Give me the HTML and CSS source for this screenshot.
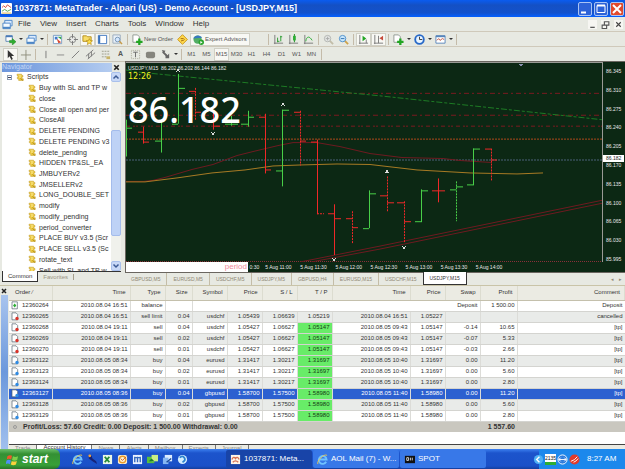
FILE: index.html
```html
<!DOCTYPE html>
<html lang="en">
<head>
<meta charset="utf-8">
<title>1037871: MetaTrader - Alpari (US)</title>
<link rel="stylesheet" href="styles.css">
</head>
<body>
<svg class="defs" aria-hidden="true">
  <symbol id="plus-doc" viewBox="0 0 12 12"><path d="M1 2h7v6H1z" fill="#fff" stroke="#5b86b5"/><path d="M1 2.500h7" stroke="#4a7ab8" stroke-width="2"/><path d="M5 7h3V5l4 3.500-4 3.500V9.500H5z" fill="#2fae2f" stroke="#158015" stroke-width=".5"/></symbol>
  <symbol id="windows" viewBox="0 0 12 12"><path d="M3 1.500h8v6H3z" fill="#dcecff" stroke="#4d86c6"/><path d="M1 4.500h8v6H1z" fill="#f4faff" stroke="#4d86c6"/><path d="M1 9.500h8" stroke="#4d86c6" stroke-width="2"/></symbol>
  <symbol id="watch" viewBox="0 0 12 12"><path d="M1.500 1.500h9v9h-9z" fill="#fff" stroke="#7a9cc4"/><path d="M3 3h3v3H3z" fill="#3b7ad0"/><path d="M5 5l5 4-3 1z" fill="#d8482f"/><path d="M6 3h4v3z" fill="#36a84a"/></symbol>
  <symbol id="target" viewBox="0 0 12 12"><circle cx="6" cy="6" r="3.500" fill="none" stroke="#888"/><path d="M6 0v12M0 6h12" stroke="#777"/><circle cx="6" cy="6" r="1.500" fill="#eee"/></symbol>
  <symbol id="folder-star" viewBox="0 0 12 12"><path d="M1 2h4l1 1h4v5H1z" fill="#f8dd68" stroke="#b48c1c"/><path d="M8 5l1 2.200 2.500.2-1.900 1.600.6 2.500L8 10.200 5.800 11.500l.6-2.500-1.900-1.600L7 7.200z" fill="#ffe14d" stroke="#b18612" stroke-width=".7"/></symbol>
  <symbol id="panel" viewBox="0 0 12 12"><path d="M1.500 1.500h9v9h-9z" fill="#fff" stroke="#3b73bd"/><path d="M2.500 2v8" stroke="#3b73bd" stroke-width="2"/></symbol>
  <symbol id="tester" viewBox="0 0 12 12"><path d="M1 1h8v9H1z" fill="#e8f0f8" stroke="#9ab"/><circle cx="6" cy="6" r="2.500" fill="#d5e8ff" stroke="#7393b5"/><path d="M8 8l3 3" stroke="#c89b48" stroke-width="1.500"/></symbol>
  <symbol id="add-doc" viewBox="0 0 12 12"><path d="M1 1h5l2 2v6H1z" fill="#fff" stroke="#909890"/><path d="M8 5v7M4.500 8.500h7" stroke="#22a522" stroke-width="2.500"/></symbol>
  <symbol id="diamond" viewBox="0 0 12 12"><path d="M6 .7L11.300 6 6 11.300.7 6z" fill="#ffd84a" stroke="#c99516"/><path d="M4 5h3l1 1-1 1H5v1" stroke="#a36c12" fill="none"/></symbol>
  <symbol id="expert" viewBox="0 0 12 12"><circle cx="5" cy="6" r="4.500" fill="#53ad65"/><path d="M0 5C3 0 8 1 10 4z" fill="#3979c1"/><circle cx="9" cy="9" r="3" fill="#2ba52f"/><path d="M8 7.500v3l2.500-1.500z" fill="#fff"/></symbol>
  <symbol id="bars" viewBox="0 0 12 12"><path d="M2 1v10M1 10h10" stroke="#777"/><path d="M5 4v5M8.500 2v6M5 8h2M8 3h2" stroke="#269a2b"/></symbol>
  <symbol id="candles" viewBox="0 0 12 12"><path d="M2 1v10M1 10h10" stroke="#777"/><path d="M7 0v9" stroke="#178b1d"/><path d="M5.500 2h3v5h-3z" fill="#2cad34"/></symbol>
  <symbol id="line" viewBox="0 0 12 12"><path d="M2 1v10M1 10h10" stroke="#777"/><path d="M3 8c1-6 4-6 7-1" fill="none" stroke="#2cad34"/></symbol>
  <symbol id="zoom" viewBox="0 0 12 12"><path d="M7 7l4 4" stroke="#cfa34b" stroke-width="2"/><circle cx="5" cy="5" r="3.500" fill="#c8e6fb" stroke="#4b8ecb"/><path d="M3 5h4" stroke="#2f6fae"/></symbol>
  <symbol id="zoom-off" viewBox="0 0 12 12"><path d="M7 7l4 4" stroke="#c2bda8" stroke-width="2"/><circle cx="5" cy="5" r="3.500" fill="#e4e6e4" stroke="#b1b4b0"/><path d="M3 5h4M5 3v4" stroke="#a9aba7"/></symbol>
  <symbol id="scroll" viewBox="0 0 12 12"><path d="M2 1v10M1 10h10M9 6v4" stroke="#777"/><path d="M5 2l4 3-4 3z" fill="#22a522"/></symbol>
  <symbol id="shift" viewBox="0 0 12 12"><path d="M2 1v10M1 10h10M6 2v8" stroke="#777"/><path d="M11 2L7 4.500 11 7z" fill="#c64a3a"/></symbol>
  <symbol id="clock" viewBox="0 0 12 12"><circle cx="6" cy="6" r="4.700" fill="#e8f4ff" stroke="#2869c8" stroke-width="2"/><path d="M6 3v3h3" fill="none" stroke="#333"/></symbol>
  <symbol id="template" viewBox="0 0 12 12"><path d="M1 2h10v8H1z" fill="#fff" stroke="#5885bb"/><path d="M1 2.500h10" stroke="#5885bb" stroke-width="2"/><path d="M2 7l2-2 1.500 2L8 5l2 1" fill="none" stroke="#bf4f3c"/></symbol>
  <symbol id="cursor" viewBox="0 0 12 12"><path d="M3 1v9l2-2 2 4 1.500-1L7 7.500h3z" fill="#333"/></symbol>
  <symbol id="cross" viewBox="0 0 12 12"><path d="M6.500 1v11M1 6.500h11" stroke="#8c8c7c"/></symbol>
  <symbol id="vline" viewBox="0 0 12 12"><path d="M6.500 2v8" stroke="#777"/></symbol>
  <symbol id="hline" viewBox="0 0 12 12"><path d="M2 6.500h8" stroke="#888"/></symbol>
  <symbol id="trend" viewBox="0 0 12 12"><path d="M2 10l8-8" stroke="#777"/></symbol>
  <symbol id="channel" viewBox="0 0 12 12"><path d="M1 8l8-7M3 11l8-7M4 5v5M7 3v5" stroke="#777"/></symbol>
  <symbol id="fibo" viewBox="0 0 12 12"><path d="M2 2.500h8M2 5.500h8M2 8.500h5" stroke="#9a9a88" stroke-dasharray="2 1"/><path d="M7 8h4v3H7z" fill="#c9b469"/></symbol>
  <symbol id="label" viewBox="0 0 12 12"><path d="M1.500 1.500h9v9h-9z" fill="none" stroke="#a9a998" stroke-dasharray="1 1"/><path d="M3.500 3.500h5M6 3.500V9" stroke="#666"/></symbol>
  <symbol id="shape" viewBox="0 0 12 12"><rect x="1" y="3" width="10" height="7" rx="2" fill="#85857d"/></symbol>
  <symbol id="arrows" viewBox="0 0 12 12"><path d="M2 1l4 1-2 3zM6 5l2 2 2-2v5H6z" fill="#666"/><path d="M3 3l5 5" stroke="#666" stroke-width="2"/></symbol>
  <symbol id="script" viewBox="0 0 12 12"><path d="M1.500 1h7v2h2v2H9v3h2v2.500H4V8H2V5.500h1V3H1.500z" fill="#edc93c" stroke="#c09a22" stroke-width=".7"/><path d="M4 3.500h4M4.500 5.500h3" stroke="#fff3b0"/><path d="M6.500 7.500l4 3" stroke="#9b7813"/></symbol>
  <symbol id="order-sell" viewBox="0 0 12 12"><path d="M1.500.5h6l2.500 2.500v8h-8.500z" fill="#fff" stroke="#4c5a66"/><circle cx="9" cy="9" r="2.500" fill="#d9342b"/></symbol>
  <symbol id="order-buy" viewBox="0 0 12 12"><path d="M1.500.5h6l2.500 2.500v8h-8.500z" fill="#fff" stroke="#4c5a66"/><circle cx="9" cy="9" r="2.500" fill="#2f8be4"/></symbol>
  <symbol id="order-balance" viewBox="0 0 12 12"><path d="M1.500.5h8v10.500h-8z" fill="#fff" stroke="#4c5a66"/><path d="M5.500 3L8 6 5.500 9 3 6z" fill="#2cae35"/></symbol>
  <symbol id="ie" viewBox="0 0 12 12"><path d="M10 8.500A4.300 4.300 0 1 1 10.500 6H3" fill="none" stroke="#6fc2ff" stroke-width="2"/><path d="M1 11C-1 8 8-1 11 1.500" fill="none" stroke="#f2c94a"/></symbol>
  <symbol id="up" viewBox="0 0 8 8"><path d="M1 7l3-6 3 6-3-2z" fill="#dcdcdc"/></symbol>
</svg>

<header class="titlebar">
  <svg class="app-icon" viewBox="0 0 12 12"><rect width="12" height="12" rx="1" fill="#fff"/><path d="M1 5l2-2 2 2 2-3 4 3" stroke="#d24535" fill="none"/><path d="M1 9l3-2 3 2 4-2" stroke="#55a549" fill="none"/><path d="M1 11h10" stroke="#e0b23c"/></svg>
  <h1>1037871: MetaTrader - Alpari (US) - Demo Account - [USDJPY,M15]</h1>
  <div class="win-buttons">
    <button aria-label="Minimize"><svg viewBox="0 0 12 12"><path d="M2 9.500h5" stroke="#fff" stroke-width="2"/></svg></button>
    <button aria-label="Restore"><svg viewBox="0 0 12 12"><path d="M2 2.500h8v7H2z" fill="none" stroke="#fff"/><path d="M2 2.500h8" stroke="#fff" stroke-width="2"/></svg></button>
    <button class="close" aria-label="Close"><svg viewBox="0 0 12 12"><path d="M2 2l8 8M10 2l-8 8" stroke="#fff" stroke-width="2"/></svg></button>
  </div>
</header>

<nav class="menubar">
  <svg class="menu-icon" viewBox="0 0 12 12"><use href="#windows"/></svg>
  <button>File</button><button>View</button><button>Insert</button><button>Charts</button><button>Tools</button><button>Window</button><button>Help</button>
  <div class="doc-buttons">
    <button aria-label="Minimize chart"><svg viewBox="0 0 8 8"><path d="M2 6.500h4" stroke="#444"/></svg></button>
    <button aria-label="Restore chart"><svg viewBox="0 0 8 8"><path d="M3 1.500h4v3H3zM1 4.500h4v3H1z" fill="none" stroke="#555"/></svg></button>
    <button aria-label="Close chart"><svg viewBox="0 0 8 8"><path d="M2 2l4 4M6 2L2 6" stroke="#444"/></svg></button>
  </div>
</nav>

<div class="toolbar">
  <button aria-label="New chart"><svg><use href="#plus-doc"/></svg></button><button class="drop" aria-label="New chart menu"></button>
  <button aria-label="Profiles"><svg><use href="#windows"/></svg></button><button class="drop" aria-label="Profiles menu"></button>
  <i class="sep"></i>
  <button aria-label="Market Watch"><svg><use href="#watch"/></svg></button>
  <button aria-label="Data Window"><svg><use href="#target"/></svg></button>
  <button class="on" aria-label="Navigator"><svg><use href="#folder-star"/></svg></button>
  <button class="on" aria-label="Terminal"><svg><use href="#panel"/></svg></button>
  <button aria-label="Strategy Tester"><svg><use href="#tester"/></svg></button>
  <i class="sep"></i>
  <button class="wide"><svg><use href="#add-doc"/></svg>New Order</button>
  <button aria-label="MetaEditor"><svg><use href="#diamond"/></svg></button>
  <button class="wide on"><svg><use href="#expert"/></svg>Expert Advisors</button>
  <i class="sep far"></i>
  <button aria-label="Bar chart"><svg><use href="#bars"/></svg></button>
  <button aria-label="Candlesticks"><svg><use href="#candles"/></svg></button>
  <button aria-label="Line chart"><svg><use href="#line"/></svg></button>
  <i class="sep"></i>
  <button aria-label="Zoom in"><svg><use href="#zoom-off"/></svg></button>
  <button aria-label="Zoom out"><svg><use href="#zoom"/></svg></button>
  <i class="sep"></i>
  <button class="on" aria-label="Auto scroll"><svg><use href="#scroll"/></svg></button>
  <button class="on" aria-label="Chart shift"><svg><use href="#shift"/></svg></button>
  <i class="sep"></i>
  <button aria-label="Indicators"><svg><use href="#add-doc"/></svg></button><button class="drop" aria-label="Indicators menu"></button>
  <button aria-label="Periods"><svg><use href="#clock"/></svg></button><button class="drop" aria-label="Periods menu"></button>
  <button aria-label="Templates"><svg><use href="#template"/></svg></button><button class="drop" aria-label="Templates menu"></button>
  <i class="sep"></i>
</div>

<div class="toolbar">
  <button class="on" aria-label="Cursor"><svg><use href="#cursor"/></svg></button>
  <button aria-label="Crosshair"><svg><use href="#cross"/></svg></button>
  <i class="sep"></i>
  <button aria-label="Vertical line"><svg><use href="#vline"/></svg></button>
  <button aria-label="Horizontal line"><svg><use href="#hline"/></svg></button>
  <button aria-label="Trendline"><svg><use href="#trend"/></svg></button>
  <button aria-label="Channel"><svg><use href="#channel"/></svg></button>
  <button aria-label="Fibonacci"><svg><use href="#fibo"/></svg></button>
  <button class="letter">A</button>
  <button aria-label="Text label"><svg><use href="#label"/></svg></button>
  <button aria-label="Shapes"><svg><use href="#shape"/></svg></button>
  <button aria-label="Arrows"><svg><use href="#arrows"/></svg></button><button class="drop" aria-label="Arrows menu"></button>
  <i class="sep"></i>
  <button>M1</button><button>M5</button><button class="on">M15</button><button>M30</button><button>H1</button><button>H4</button><button>D1</button><button>W1</button><button>MN</button>
  <i class="sep"></i>
</div>

<main class="workspace">
  <aside class="navigator">
    <div class="nav-head"><span>Navigator</span><button aria-label="Close navigator"><svg viewBox="0 0 8 8"><path d="M2 2l4 4M6 2L2 6" stroke="#222" stroke-width="1.500"/></svg></button></div>
    <div class="nav-body">
      <ul class="tree">
        <li class="root"><i class="box"></i><svg><use href="#script"/></svg>Scripts</li>
        <li><svg><use href="#script"/></svg>Buy with SL and TP w</li>
        <li><svg><use href="#script"/></svg>close</li>
        <li><svg><use href="#script"/></svg>Close all open and per</li>
        <li><svg><use href="#script"/></svg>CloseAll</li>
        <li><svg><use href="#script"/></svg>DELETE PENDING</li>
        <li><svg><use href="#script"/></svg>DELETE PENDING v3</li>
        <li><svg><use href="#script"/></svg>delete_pending</li>
        <li><svg><use href="#script"/></svg>HIDDEN TP&amp;SL_EA</li>
        <li><svg><use href="#script"/></svg>JMBUYERv2</li>
        <li><svg><use href="#script"/></svg>JMSELLERv2</li>
        <li><svg><use href="#script"/></svg>LONG_DOUBLE_SET</li>
        <li><svg><use href="#script"/></svg>modify</li>
        <li><svg><use href="#script"/></svg>modify_pending</li>
        <li><svg><use href="#script"/></svg>period_converter</li>
        <li><svg><use href="#script"/></svg>PLACE BUY v3.5 (Scr</li>
        <li><svg><use href="#script"/></svg>PLACE SELL v3.5 (Sc</li>
        <li><svg><use href="#script"/></svg>rotate_text</li>
        <li><svg><use href="#script"/></svg>Sell with SL and TP w</li>
      </ul>
      <div class="scrollbar">
        <button aria-label="Scroll up"><svg viewBox="0 0 8 8"><path d="M1.500 5.500L4 3l2.500 2.500" fill="none" stroke="#3c5a94" stroke-width="1.500"/></svg></button>
        <div class="track"><div class="thumb"></div></div>
        <button aria-label="Scroll down"><svg viewBox="0 0 8 8"><path d="M1.500 2.500L4 5l2.500-2.500" fill="none" stroke="#3c5a94" stroke-width="1.500"/></svg></button>
      </div>
    </div>
    <div class="nav-tabs"><button class="active">Common</button><button>Favorites</button></div>
  </aside>

  <section class="charts">
    <div class="chart">
      <div class="plot">
        <svg class="graph" viewBox="126 62 476 200" preserveAspectRatio="none">
          <g fill="none" stroke="#7a1a20">
            <path d="M126 92.500h476" stroke-dasharray="5 3 2 3"/>
            <path d="M126 114.500h476" stroke-dasharray="5 3 2 3"/>
            <path d="M126 125.500h476" stroke-dasharray="4 3 2 1 2 3"/>
            <path d="M126 138.500h476" stroke="#b04a1c" stroke-dasharray="2 1"/>
            <path d="M126 159.500h476" stroke="#4a6078" stroke-dasharray="2 1"/>
            <path d="M126 261.500h476" stroke="#8a3038" stroke-dasharray="1 1"/>
            <path d="M126 69L137 71 380 95 602 119" stroke="#1d7a24" stroke-dasharray="6 2 3 2"/>
            <path d="M300 262L380 246 602 200M311 262L380 249 602 203" stroke="#6e1a20"/>
            <path d="M126 181h18l9-1 12-3 27-8 21-5 24-9 16-4 25-6 15-3h24l23 4 30 7 32 4 41 1 17 2 32 2" stroke="#6e1a20"/>
            <path d="M126 181.500h19l32-4 35-5 33-3 28-4 27-1 37-1 33 .5 47 5.500 53 3 47 1 26-1" stroke="#a87a24"/>
          </g>
          <g fill="none" stroke="#48d048">
            <path d="M126.500 119v37M126 127.500h6M161.500 119v33M155 140.500h6M178.500 73v50M172 123.500h6M178 87.500h7M231.500 115v10M225 123.500h13M248.500 110v16M241 123.500h7M248 116.500h6M282.500 109v77M276 170.500h6M282 109.500h7M369.500 190v38M363 228.500h6M369 193.500h7M421.500 189v33M415 221.500h6M421 190.500h7M473.500 148v37M467 184.500h6M473 148.500h7M450 189.500h6M456 186.500h7"/>
            <path d="M456.500 181v40" stroke-dasharray="2 1"/>
          </g>
          <g fill="none" stroke="#f02828">
            <path d="M143.500 126v17M138 131.500h5M143 141.500h6M213.500 112v17M213 125.500h7M265.500 113v60M259 116.500h6M265 169.500h6M317.500 139v75M311 141.500h6M334.500 204v51M328 213.500h6M334 218.500h7M346 218.500h6M352 227.500h6M380 195.500h7M387 202.500h7M397 202.500h7M404 221.500h7M438.500 178v24M432 190.500h13M485 148.500h6M491 159.500h6M294 111.500h6M300 140.500h6M189 90.500h6M195 111.500h6"/>
            <path d="M195.500 87v33M300.500 110v55M317 213.500h7M352.500 211v33M387.500 176v36M404.500 201v42M491.500 148v33" stroke-dasharray="2 1"/>
          </g>
          <g>
            <use href="#up" x="174" y="66" width="8" height="6"/><use href="#up" x="279" y="100" width="8" height="6"/><use href="#up" x="383" y="168" width="8" height="6"/>
            <g transform="matrix(1 0 0 -1 0 270)"><use href="#up" x="209" y="134" width="8" height="6"/></g>
            <g transform="matrix(1 0 0 -1 0 520)"><use href="#up" x="330" y="257" width="8" height="6"/></g>
            <g transform="matrix(1 0 0 -1 0 496)"><use href="#up" x="400" y="245" width="8" height="6"/></g>
            <path d="M518 63h6l-3 3z" fill="#8a90b0"/>
          </g>
        </svg>
        <div class="readout">
          <span class="quote">USDJPY,M15 &nbsp;86.202 86.202 86.144 86.182</span>
          <span class="timer">12:26</span>
          <span class="big">86.182</span>
        </div>
      </div>
      <div class="price-axis">
        <span>86.345</span><span>86.310</span><span>86.275</span><span>86.240</span><span>86.205</span><span>86.170</span><span>86.135</span><span>86.100</span><span>86.065</span><span>86.030</span><span>85.995</span>
        <b class="current">86.182</b>
      </div>
      <div class="time-axis">
        <span class="cut">0:30</span><span>5 Aug 11:00</span><span>5 Aug 11:30</span><span>5 Aug 12:00</span><span>5 Aug 12:30</span><span>5 Aug 13:00</span><span>5 Aug 13:30</span><span>5 Aug 14:00</span>
        <b class="period">period</b>
      </div>
    </div>
    <div class="chart-tabs">
      <button>GBPUSD,M5</button><button>EURUSD,M5</button><button>USDCHF,M5</button><button>USDJPY,M5</button><button>GBPUSD,H4</button><button>EURUSD,M15</button><button>USDCHF,M15</button><button class="active">USDJPY,M15</button>
      <span class="pager"><button aria-label="Previous tabs">◂</button><button aria-label="Next tabs">▸</button></span>
    </div>
  </section>
</main>

<section class="terminal">
  <div class="term-side"><button aria-label="Close terminal"><svg viewBox="0 0 8 8"><path d="M2 2l4 4M6 2L2 6" stroke="#222" stroke-width="1.500"/></svg></button></div>
  <div class="term-main">
    <table>
      <colgroup><col class="c-order"><col class="c-time"><col class="c-type"><col class="c-size"><col class="c-price"><col class="c-price"><col class="c-price"><col class="c-price"><col class="c-time"><col class="c-price"><col class="c-price"><col class="c-profit"><col></colgroup>
      <thead><tr><th>Order <small>⁄</small></th><th>Time</th><th>Type</th><th>Size</th><th>Symbol</th><th>Price</th><th>S / L</th><th>T / P</th><th>Time</th><th>Price</th><th>Swap</th><th>Profit</th><th>Comment</th></tr></thead>
      <tbody>
        <tr><td><svg><use href="#order-balance"/></svg>12360264</td><td>2010.08.04 16:51</td><td>balance</td><td></td><td class="open"></td><td class="open"></td><td class="open"></td><td class="open"></td><td class="open"></td><td class="open"></td><td>Deposit</td><td>1 500.00</td><td>Deposit</td></tr>
        <tr><td><svg><use href="#order-sell"/></svg>12360265</td><td>2010.08.04 16:51</td><td>sell limit</td><td>0.04</td><td>usdchf</td><td>1.05439</td><td>1.06639</td><td>1.05219</td><td>2010.08.04 16:51</td><td>1.05227</td><td></td><td></td><td>cancelled</td></tr>
        <tr><td><svg><use href="#order-sell"/></svg>12360268</td><td>2010.08.04 19:11</td><td>sell</td><td>0.04</td><td>usdchf</td><td>1.05427</td><td>1.06627</td><td class="hit">1.05147</td><td>2010.08.05 09:43</td><td>1.05147</td><td>-0.14</td><td>10.65</td><td>[tp]</td></tr>
        <tr><td><svg><use href="#order-sell"/></svg>12360269</td><td>2010.08.04 19:11</td><td>sell</td><td>0.02</td><td>usdchf</td><td>1.05427</td><td>1.06627</td><td class="hit">1.05147</td><td>2010.08.05 09:43</td><td>1.05147</td><td>-0.07</td><td>5.33</td><td>[tp]</td></tr>
        <tr><td><svg><use href="#order-sell"/></svg>12360270</td><td>2010.08.04 19:11</td><td>sell</td><td>0.01</td><td>usdchf</td><td>1.05427</td><td>1.06627</td><td class="hit">1.05147</td><td>2010.08.05 09:43</td><td>1.05147</td><td>-0.03</td><td>2.66</td><td>[tp]</td></tr>
        <tr><td><svg><use href="#order-buy"/></svg>12363122</td><td>2010.08.05 08:34</td><td>buy</td><td>0.04</td><td>eurusd</td><td>1.31417</td><td>1.30217</td><td class="hit">1.31697</td><td>2010.08.05 10:40</td><td>1.31697</td><td>0.00</td><td>11.20</td><td>[tp]</td></tr>
        <tr><td><svg><use href="#order-buy"/></svg>12363123</td><td>2010.08.05 08:34</td><td>buy</td><td>0.02</td><td>eurusd</td><td>1.31417</td><td>1.30217</td><td class="hit">1.31697</td><td>2010.08.05 10:40</td><td>1.31697</td><td>0.00</td><td>5.60</td><td>[tp]</td></tr>
        <tr><td><svg><use href="#order-buy"/></svg>12363124</td><td>2010.08.05 08:34</td><td>buy</td><td>0.01</td><td>eurusd</td><td>1.31417</td><td>1.30217</td><td class="hit">1.31697</td><td>2010.08.05 10:40</td><td>1.31697</td><td>0.00</td><td>2.80</td><td>[tp]</td></tr>
        <tr class="selected"><td><svg><use href="#order-buy"/></svg>12363127</td><td>2010.08.05 08:36</td><td>buy</td><td>0.04</td><td>gbpusd</td><td>1.58700</td><td>1.57500</td><td class="hit">1.58980</td><td>2010.08.05 11:40</td><td>1.58980</td><td>0.00</td><td>11.20</td><td>[tp]</td></tr>
        <tr><td><svg><use href="#order-buy"/></svg>12363128</td><td>2010.08.05 08:36</td><td>buy</td><td>0.02</td><td>gbpusd</td><td>1.58700</td><td>1.57500</td><td class="hit">1.58980</td><td>2010.08.05 11:40</td><td>1.58980</td><td>0.00</td><td>5.60</td><td>[tp]</td></tr>
        <tr><td><svg><use href="#order-buy"/></svg>12363129</td><td>2010.08.05 08:36</td><td>buy</td><td>0.01</td><td>gbpusd</td><td>1.58700</td><td>1.57500</td><td class="hit">1.58980</td><td>2010.08.05 11:40</td><td>1.58980</td><td>0.00</td><td>2.80</td><td>[tp]</td></tr>
      </tbody>
      <tfoot><tr><td colspan="11"><i class="dot"></i>Profit/Loss: 57.60 Credit: 0.00 Deposit: 1 500.00 Withdrawal: 0.00</td><td>1 557.60</td><td></td></tr></tfoot>
    </table>
    <div class="term-tabs"><button>Trade</button><button class="active">Account History</button><button>News</button><button>Alerts</button><button>Mailbox</button><button>Experts</button><button>Journal</button></div>
  </div>
</section>

<footer class="taskbar">
  <button class="start"><svg viewBox="0 0 14 14"><path d="M1.500 3.500Q4 1.500 6.500 3L5.500 7Q3 5.500.8 7z" fill="#f0562c"/><path d="M7.500 3.500q2.500 1.500 5.500 0l-1 4q-3 1.500-5.500 0z" fill="#7ed04a"/><path d="M.6 8q2.400-1.500 4.700 0l-1 4q-2.200-1.500-4.800 0z" fill="#4f8ff5"/><path d="M6.200 8.500q2.500 1.500 5.500 0l-1 4q-3 1.500-5.500 0z" fill="#f9d23c"/></svg>start</button>
  <nav class="quick">
    <a href="#ie" aria-label="Internet"><svg viewBox="0 0 12 12"><use href="#ie"/></svg></a>
    <a href="#run" aria-label="Messenger"><svg viewBox="0 0 12 12"><path d="M2 1l3 1 1 3 4 3 1 3-5-3-4-3z" fill="#16247a"/><circle cx="3" cy="2" r="1.500" fill="#f2a33c"/></svg></a>
    <a href="#xl" aria-label="Spreadsheet"><svg viewBox="0 0 12 12"><rect x="1" y="1" width="10" height="10" fill="#e9f7e6"/><path d="M3 3l5 6M8 3L3 9" stroke="#238a35" stroke-width="2"/></svg></a>
    <a href="#mail" aria-label="Mail"><svg viewBox="0 0 12 12"><rect x="1" y="1" width="10" height="10" rx="2" fill="#fff2d0"/><circle cx="6" cy="6" r="3.500" fill="none" stroke="#e89a2d" stroke-width="1.500"/><path d="M4 5l2 2 4-4" fill="none" stroke="#c95a26"/></svg></a>
    <a href="#doc" aria-label="Documents"><svg viewBox="0 0 12 12"><rect x="1" y="1" width="10" height="10" fill="#eaf2ff"/><path d="M3 3v6M6 3v6M9 3v6M3 4h6" stroke="#3569be" stroke-width="1.500"/></svg></a>
    <a href="#pics" aria-label="Pictures"><svg viewBox="0 0 12 12"><rect y="3" width="8" height="7" fill="#58c03f"/><rect x="5" y="1" width="7" height="7" fill="#c9ee86"/><path d="M2 8l3-3 3 3z" fill="#1d7e2d"/></svg></a>
    <a href="#desk" aria-label="Desktop"><svg viewBox="0 0 12 12"><path d="M3 1h8v7H3z" fill="#dcecff"/><path d="M1 4h6v7H1z" fill="#86b7f3"/><path d="M5 9l5-4" stroke="#1c4a96" stroke-width="1.500"/></svg></a>
    <a href="#web" aria-label="Web"><svg viewBox="0 0 12 12"><circle cx="6" cy="6" r="5" fill="#d4eeff"/><path d="M3 4q3-3 5 0t-2 5" fill="none" stroke="#2b83cf" stroke-width="2"/></svg></a>
  </nav>
  <div class="tasks">
    <button class="current-task"><svg viewBox="0 0 12 12"><rect x="1" y="1" width="10" height="10" fill="#fff5e8"/><path d="M2 6q2-4 4-1 2-3 4 1M3 9q3-3 6 0" fill="none" stroke="#d67253" stroke-width="1.500"/></svg>1037871: Meta...</button>
    <button><svg viewBox="0 0 12 12"><use href="#ie"/></svg>AOL Mail (7) - W...</button>
    <button><svg viewBox="0 0 12 12"><rect x="1" y="2" width="11" height="8" fill="#111"/><path d="M3 4v3h2V4zM7 4v3M9 7V4" fill="none" stroke="#ddd"/></svg>SPOT</button>
  </div>
  <div class="tray">
    <svg viewBox="0 0 12 12"><circle cx="6" cy="6" r="5" fill="#4fb1f4"/><path d="M7 3L4 6l3 3" fill="none" stroke="#fff" stroke-width="1.500"/></svg>
    <span class="meter">2135</span>
    <svg viewBox="0 0 12 12"><circle cx="6" cy="6" r="5" fill="#2e7cdc" stroke="#fff"/><path d="M2 6h8M4 4L2 6l2 2M8 4l2 2-2 2" fill="none" stroke="#fff"/></svg>
    <svg viewBox="0 0 12 12"><circle cx="6" cy="6" r="5.500" fill="#e23a2b"/><path d="M2 8q4-1 7-5M5 9q3-1 5-4" fill="none" stroke="#fff"/></svg>
    <time>8:27 AM</time>
  </div>
</footer>
</body>
</html>
```

FILE: styles.css
```css
* { box-sizing: border-box; }
html, body { height: 100%; margin: 0; }
body {
  display: flex;
  flex-direction: column;
  overflow: hidden;
  background: #e7e9e2;
  color: #333;
  font: 7px/10px "Liberation Sans", Arial, sans-serif;
}
button { margin: 0; padding: 0; border: 0; background: none; color: inherit; font: inherit; white-space: nowrap; }
button svg { display: block; }
.defs { position: absolute; width: 0; height: 0; }

.titlebar {
  display: flex;
  align-items: center;
  flex: none;
  height: 17px;
  padding: 0 1px;
  background: linear-gradient(#0a5cf0, #1450c4 30%, #1352cc 75%, #0560ff);
}
.app-icon { width: 11px; height: 11px; }
.titlebar h1 { flex: 1; margin: 0 0 0 2px; color: #fff; font: bold 9px/17px "Liberation Sans", Arial, sans-serif; }
.win-buttons { display: flex; gap: 2px; }
.win-buttons button { width: 14px; height: 14px; border: 1px solid #a9c4f5; border-radius: 2px; background: #2c62d8; }
.win-buttons .close { background: #e0492c; }

.menubar { display: flex; align-items: center; flex: none; height: 14px; padding: 0 2px; }
.menu-icon { width: 11px; height: 11px; margin-right: 5px; }
.menubar > button { margin-right: 9px; font-size: 8px; }
.doc-buttons { display: flex; gap: 4px; margin-left: auto; }
.doc-buttons button { width: 9px; height: 9px; background: #f6f6f2; }

.toolbar {
  display: flex;
  align-items: center;
  flex: none;
  height: 15px;
  padding: 0 3px;
  border-top: 1px solid #cfc9ba;
  color: #555;
  font-size: 6px;
}
.toolbar button { width: 15px; height: 13px; flex: none; }
.toolbar button svg { width: 11px; height: 11px; margin: auto; }
.toolbar .drop { width: 6px; }
.toolbar .drop::before { content: ""; display: block; width: 0; margin: auto; border: 2px solid transparent; border-top-color: #333; border-bottom: 0; }
.toolbar .wide { display: flex; align-items: center; width: auto; gap: 1px; padding: 0 2px; }
.toolbar .wide svg { margin: 0; }
.toolbar .on { background: #f8f8f4; border: 1px solid #d0d0c6; }
.toolbar .letter { font-size: 7px; font-weight: bold; }
.sep { flex: none; width: 1px; height: 11px; margin: 0 2px; background: #c4bba9; }
.sep.far { margin-left: 18px; }

.workspace { display: flex; flex: 1; min-height: 0; }
.navigator { display: flex; flex-direction: column; flex: none; width: 125px; padding: 1px 4px 3px 2px; border-top: 1px solid #c9c4b6; }
.nav-head { display: flex; justify-content: space-between; height: 9px; flex: none; overflow: hidden; }
.nav-head span { flex: 1; background: linear-gradient(90deg, #6c96dc, #b4ccf0); color: #c4d8f6; line-height: 7px; }
.nav-head button { width: 9px; height: 9px; }
.nav-body { display: flex; flex: 1; min-height: 0; overflow: hidden; background: #fff; }
.tree {
  display: grid;
  grid-auto-rows: 1fr;
  flex: 1;
  min-width: 0;
  height: calc(100% + 5px);
  margin: 0;
  padding: 0;
  overflow: hidden;
  list-style: none;
  font-size: 7px;
}
.tree li { display: flex; align-items: center; min-height: 0; gap: 3px; padding-left: 26px; white-space: nowrap; }
.tree .root { padding-left: 5px; }
.tree svg { flex: none; width: 8px; height: 9px; }
.box { width: 5px; height: 5px; margin-right: 1px; border: 1px solid #8c9cb4; background: linear-gradient(#445, #445) center / 3px 1px no-repeat; }
.scrollbar { display: flex; flex-direction: column; flex: none; width: 10px; background: #f0f1ec; }
.scrollbar button { height: 10px; border: 1px solid #a9c0ec; border-radius: 2px; background: #c8d8f6; }
.scrollbar button svg { width: 8px; height: 8px; }
.track { display: flex; flex-direction: column; flex: 1; }
.track::before { content: ""; flex: 49; }
.track::after { content: ""; flex: 25; }
.thumb { flex: 106; border: 1px solid #a4bcec; border-radius: 2px; background: #bed2f6; }
.nav-tabs { display: flex; flex: none; height: 11px; border-top: 1px solid #333; color: #9a9484; font-size: 6px; }
.nav-tabs button { padding: 0 5px; }
.nav-tabs button + button { margin: 2px 0; border-right: 1px solid #a79f8c; line-height: 7px; }
.nav-tabs .active { margin-top: -1px; border: 1px solid #333; border-top: 0; background: #fff; color: #333; }

.charts { display: flex; flex-direction: column; flex: 1; min-width: 0; }
.chart {
  display: grid;
  grid-template: minmax(0, 1fr) 10px / minmax(0, 1fr) 22px;
  flex: 1;
  min-height: 0;
  border: solid #6a6660;
  border-width: 1px 0 1px 1px;
  background: #0c2814;
  color: #e8e8e8;
}
.plot { position: relative; border: solid #9a9a96; border-width: 1px 1px 0 0; }
.graph { display: block; width: 100%; height: 100%; shape-rendering: crispEdges; }
.readout { position: absolute; left: 2px; top: 1px; display: flex; flex-direction: column; align-items: flex-start; }
.quote { font-size: 5px; line-height: 8px; }
.timer { color: #f0f020; font: 8px/10px "DejaVu Sans", sans-serif; }
.big { color: #fff; font: 500 36px/56px "Noto Sans", sans-serif; }
.price-axis { position: relative; display: flex; flex-direction: column; justify-content: space-between; padding: 6px 0 0 3px; font-size: 5px; line-height: 6px; }
.current { position: absolute; top: 93px; left: 0; right: 1px; padding-left: 3px; background: #fff; color: #222; font-weight: normal; line-height: 7px; }
.time-axis { position: relative; grid-column: 1 / -1; display: grid; grid-template-columns: 139fr repeat(6, 35fr) 149fr; font-size: 5px; line-height: 10px; white-space: nowrap; }
.cut { padding-right: 6px; text-align: right; }
.period { position: absolute; left: 0; top: 0; bottom: 0; width: 122px; padding-right: 1px; background: #fff; color: #f08c9c; font: 8px/10px "Liberation Sans", Arial, sans-serif; text-align: right; }
.chart-tabs { display: flex; flex: none; height: 12px; color: #8f8874; font-size: 5px; }
.chart-tabs > button { padding: 0 6px; }
.chart-tabs > button + button:not(.active) { border-left: 1px solid #c4bda8; }
.chart-tabs > .active { margin-top: -1px; border: 1px solid #333; border-top: 0; background: #fff; color: #333; }
.pager { display: flex; gap: 5px; margin-left: auto; padding-right: 3px; }

.terminal { display: flex; flex: none; border-top: 1px solid #c9c4a8; background: #fff; }
.term-side { display: flex; flex-direction: column; flex: none; width: 9px; background: #e7e9e2; }
.term-side button { height: 9px; width: 8px; }
.term-side::after { content: ""; flex: 1; margin: 0 1px; background: linear-gradient(#a8c4ee, #6c98dc 50%, #a0c0ee); }
.term-main { flex: 1; min-width: 0; }
table { width: 100%; border-collapse: collapse; table-layout: fixed; font-size: 6px; }
tr { height: 11px; }
th, td { height: 11px; padding: 0 2px; text-align: right; line-height: 9px; white-space: nowrap; }
thead tr { background: #ebebe3; }
th { height: 14px; padding-right: 4px; border-right: 1px solid #dcdcd0; border-bottom: 1px solid #c4c0ac; font-weight: normal; }
th:first-child, td:first-child { text-align: left; }
th:first-child { padding-left: 6px; }
tbody td { border-right: 1px solid #dcdcd8; border-bottom: 1px solid #d4d4d0; }
tbody td:last-child, tbody .open { border-right: 0; }
tbody tr:nth-child(even) { background: #e9ebe9; }
td svg { float: left; width: 8px; height: 9px; margin-right: 3px; }
tbody .hit { background: #68ec68; color: #143c14; }
tbody tr.selected { background: #2c60d0; color: #fff; }
tfoot { background: #c9c7bf; font-size: 7px; font-weight: bold; }
.dot { display: inline-block; width: 4px; height: 4px; margin: 0 6px 0 2px; border: 1px solid #999; border-radius: 50%; }
.c-order { width: 43px; } .c-time { width: 78px; } .c-type { width: 35px; } .c-size { width: 27px; } .c-price { width: 35px; } .c-profit { width: 37px; }
.term-tabs { display: flex; height: 5px; margin-top: 12px; overflow: hidden; border-top: 1px solid #444; background: #ebebe3; color: #888; }
.term-tabs button { padding: 0 6px; font-size: 6px; line-height: 7px; height: 7px; border-right: 1px solid #777; }
.term-tabs .active { margin-top: -1px; background: #fff; color: #333; }

.taskbar { display: flex; flex: none; height: 20px; background: linear-gradient(#3c80f0, #1c54cc 20%, #1a50c8 85%, #143e9c); color: #fff; font-size: 8px; line-height: 18px; }
.taskbar svg { flex: none; width: 11px; height: 11px; }
.start { display: flex; align-items: center; gap: 3px; width: 60px; padding-left: 6px; border-radius: 0 6px 6px 0; background: linear-gradient(#6cc06c, #349034 25%, #38a038 80%, #287428); font: italic bold 12px/18px "Liberation Sans", Arial, sans-serif; }
.start svg { width: 13px; height: 13px; }
.quick { display: flex; align-items: center; gap: 4px; padding-left: 12px; width: 166px; }
.quick a { display: flex; }
.tasks { display: flex; flex: 1; gap: 1px; padding: 1px 0; }
.tasks button { display: flex; align-items: center; gap: 3px; width: 86px; padding-left: 4px; border-radius: 2px; background: #3878e8; }
.tasks .current-task { background: #1844a8; }
.tray { display: flex; align-items: center; gap: 1px; width: 92px; background: linear-gradient(90deg, transparent 6px, #1c88ec 6px); }
.meter { width: 11px; height: 11px; border-bottom: 3px solid #2cae35; background: #fff; color: #111; font-size: 5px; line-height: 8px; text-align: center; overflow: hidden; }
.tray time { margin-left: 6px; }
```
